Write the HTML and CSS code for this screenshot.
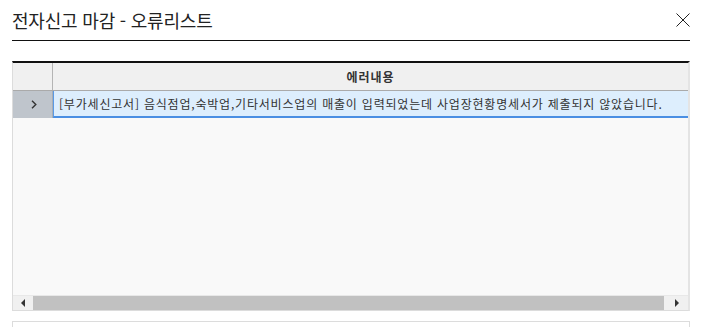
FILE: index.html
```html
<!DOCTYPE html>
<html lang="ko">
<head>
    <meta charset="UTF-8">
    <meta name="viewport" content="width=device-width, initial-scale=1.0">
    <title>전자신고 마감 - 오류리스트</title>
    <link rel="stylesheet" href="styles.css">
</head>
<body>
    <div class="dialog">
        <!-- 제목 영역 -->
        <div class="dialog-head">
            <h1 class="dialog-title">전자신고 마감 - 오류리스트</h1>
            <button class="close-btn" type="button" aria-label="닫기">
                <svg width="14" height="14" viewBox="0 0 14 14">
                    <path d="M0.5 0.5 L13.5 13.5 M13.5 0.5 L0.5 13.5" stroke="#222" stroke-width="1" fill="none"/>
                </svg>
            </button>
        </div>

        <!-- 오류 그리드 -->
        <div class="grid">
            <div class="grid-head">
                <div class="cell-num"></div>
                <div class="cell-title">에러내용</div>
            </div>
            <div class="grid-row">
                <div class="cell-num row-mark">
                    <svg width="6" height="9" viewBox="0 0 6 9">
                        <path d="M1 0.8 L4.8 4.5 L1 8.2" stroke="#333" stroke-width="1.4" fill="none"/>
                    </svg>
                </div>
                <div class="cell-text">[부가세신고서] 음식점업,숙박업,기타서비스업의 매출이 입력되었는데 사업장현황명세서가 제출되지 않았습니다.</div>
            </div>
            <div class="grid-body"></div>
            <div class="hscroll">
                <div class="scroll-btn">
                    <svg width="5" height="8" viewBox="0 0 5 8"><path d="M4 0 L0 4 L4 8 Z" fill="#333"/></svg>
                </div>
                <div class="scroll-thumb"></div>
                <div class="scroll-btn scroll-btn-right">
                    <svg width="5" height="8" viewBox="0 0 5 8"><path d="M1 0 L5 4 L1 8 Z" fill="#333"/></svg>
                </div>
            </div>
        </div>

        <div class="dialog-foot"></div>
    </div>
</body>
</html>
```

FILE: styles.css
```css
* {
    margin: 0;
    padding: 0;
    box-sizing: border-box;
}

html, body {
    overflow: hidden;
}

body {
    background: #fff;
    color: #333;
    font-family: 'Noto Sans CJK KR', 'Noto Sans', sans-serif;
}

.dialog {
    padding: 0 15px 0 12px;
}

/* 제목 */
.dialog-head {
    display: flex;
    align-items: center;
    justify-content: space-between;
    height: 41px;
    padding-top: 8px;
    padding-bottom: 8px;
    border-bottom: 1px solid #111;
}

.dialog-title {
    font-size: 18px;
    font-weight: 400;
    line-height: 24px;
    color: #222;
    letter-spacing: -0.2px;
}

.close-btn {
    display: flex;
    border: 0;
    background: none;
}

/* 그리드 */
.grid {
    margin-top: 20px;
    border: 1px solid #dcdcdc;
    border-top: 2px solid #111;
    border-right: 2px solid #e4e4e4;
}

.grid-head {
    display: grid;
    grid-template-columns: 40px 1fr;
    height: 28px;
    background: #f0f0f0;
    border-bottom: 1px solid #aaa;
}

.grid-head .cell-num {
    border-right: 1px solid #b4b4b4;
}

.cell-title {
    font-size: 12px;
    font-weight: 700;
    line-height: 27px;
    text-align: center;
    letter-spacing: 1px;
    color: #333;
}

.grid-row {
    display: grid;
    grid-template-columns: 40px 1fr;
    height: 27px;
}

.row-mark {
    display: flex;
    align-items: center;
    justify-content: center;
    background: #bfc5cc;
    border-right: 1px solid #a8aeb5;
    padding-left: 2px;
}

.cell-text {
    background: #ddeefd;
    border-left: 1px solid #5a9ae6;
    border-bottom: 2px solid #4a8fe3;
    padding-left: 5px;
    font-size: 12px;
    line-height: 25px;
    letter-spacing: 0.8px;
    color: #333;
    white-space: nowrap;
    overflow: hidden;
}

.grid-body {
    height: 177px;
    background: #f9f9f9;
}

/* 가로 스크롤 */
.hscroll {
    display: flex;
    height: 15px;
    background: #f0f0f0;
    border-top: 1px solid #e8e8e8;
}

.scroll-btn {
    display: flex;
    align-items: center;
    justify-content: center;
    width: 20px;
}

.scroll-btn-right {
    width: 24px;
}

.scroll-thumb {
    flex: 1;
    background: #c1c1c1;
}

.dialog-foot {
    margin-top: 10px;
    height: 7px;
    border: 1px solid #dcdcdc;
}
```
